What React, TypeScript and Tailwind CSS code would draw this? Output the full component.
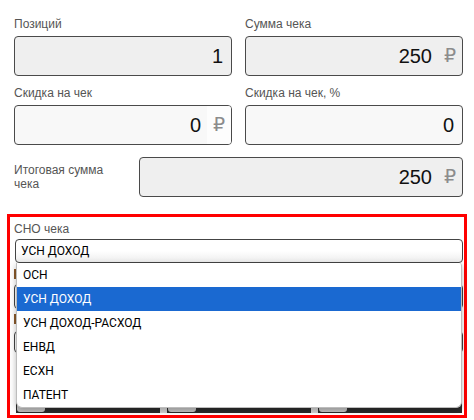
import React from 'react';

type MoneyFieldProps = {
  value: string;
  suffix?: string;
  editable?: boolean;
  className?: string;
};

const MoneyField = ({ value, suffix, editable = false, className }: MoneyFieldProps) => {
  return (
    <div
      className={[
        'flex h-[40px] items-stretch overflow-hidden rounded-[4px] border border-[#4a4a4a]',
        editable ? 'bg-[#f8f8f8]' : 'bg-[#efefef]',
        className,
      ]
        .filter(Boolean)
        .join(' ')}
    >
      <span
        className={[
          'flex flex-1 items-center justify-end text-[20px] text-[#111]',
          suffix ? 'pr-[6px]' : 'pr-[8px]',
        ].join(' ')}
      >
        {value}
      </span>
      {suffix ? (
        <span
          className={[
            'flex w-[24px] items-center justify-center text-[19px] text-[#8c8c8c]',
            editable ? 'bg-[#fdfdfd]' : '',
          ].join(' ')}
        >
          {suffix}
        </span>
      ) : null}
    </div>
  );
};

const Label = ({ children }: { children: React.ReactNode }) => (
  <div className="mb-1 h-4 text-[12px] leading-4 text-[#555]">{children}</div>
);

const taxOptions = ['ОСН', 'УСН ДОХОД', 'УСН ДОХОД-РАСХОД', 'ЕНВД', 'ЕСХН', 'ПАТЕНТ'];

export default function App() {
  const selected = 'УСН ДОХОД';

  return (
    <div className="h-[420px] w-[474px] overflow-hidden bg-white font-['Liberation_Sans','DejaVu_Sans',Arial,sans-serif]">
      <div className="pl-[14px] pr-[11px] pt-4">
        <div className="grid grid-cols-2 gap-x-[13px] gap-y-[9px]">
          <div>
            <Label>Позиций</Label>
            <MoneyField value="1" />
          </div>
          <div>
            <Label>Сумма чека</Label>
            <MoneyField value="250" suffix="₽" />
          </div>
          <div>
            <Label>Скидка на чек</Label>
            <MoneyField value="0" suffix="₽" editable />
          </div>
          <div>
            <Label>Скидка на чек, %</Label>
            <MoneyField value="0" editable />
          </div>
        </div>

        <div className="mt-[12px] flex items-center">
          <div className="w-[125px] text-[12px] leading-[14px] text-[#555]">
            Итоговая сумма
            <br />
            чека
          </div>
          <MoneyField value="250" suffix="₽" className="h-[39px] flex-1" />
        </div>

        {/* Focused block with the open tax system list */}
        <div className="-ml-[7px] -mr-[4px] mt-[17px] border-[3px] border-[#ff0000] pb-[2px] pl-[4px] pr-[1px] pt-[4px]">
          <div className="mb-[2px] h-4 text-[12px] leading-4 text-[#555]">СНО чека</div>

          <div className="relative ml-[1px] font-['Roboto',Arial,sans-serif]">
            <div className="flex h-[24px] items-center rounded-[4px] border border-[#444] bg-gradient-to-b from-white via-white to-[#ededed] pl-[5px] text-[12px] text-black">
              {selected}
            </div>

            <ul className="absolute left-[1px] right-[1px] top-[24px] z-10 overflow-hidden rounded-b-[6px] rounded-tr-[3px] border border-t-0 border-[#bdbdbd] bg-white shadow-[0_2px_6px_rgba(0,0,0,0.28)]">
              {taxOptions.map((option) => (
                <li
                  key={option}
                  className={[
                    'h-[24px] pl-[6px] text-[12px] leading-[24px]',
                    option === selected ? 'bg-[#1a69d1] text-white' : 'text-black',
                  ].join(' ')}
                >
                  {option}
                </li>
              ))}
            </ul>
          </div>

          {/* Fields hidden under the list */}
          <div className="mt-[3px] flex h-4 items-center">
            <div className="h-[10px] w-[6px] bg-[#8a5a2b]" />
          </div>
          <div className="mt-[2px] grid grid-cols-2 gap-x-[13px]">
            <div className="h-[25px] rounded-[4px] border border-[#444]" />
            <div className="h-[25px] rounded-[4px] border border-[#444]" />
          </div>
          <div className="mt-[2px] flex h-4 items-center">
            <div className="h-[10px] w-[6px] bg-[#8a5a2b]" />
          </div>
          <div className="mt-[4px] grid grid-cols-2 gap-x-[13px]">
            <div className="h-[22px] rounded-[4px] border border-[#444]" />
            <div className="h-[22px] rounded-[4px] border border-[#444]" />
          </div>

          <div className="ml-[2px] mr-[1px] mt-[28px] flex h-[32px] gap-[7px] bg-[#d4d4d4]">
            {[0, 1, 2].map((i) => (
              <div key={i} className="flex flex-1 items-end bg-[#2b2b2b] pb-[1px] pl-[1px]">
                <div className="h-[20px] w-[28px] rounded-[3px] bg-[#c4c4c4]" />
              </div>
            ))}
          </div>
        </div>
      </div>
    </div>
  );
}
